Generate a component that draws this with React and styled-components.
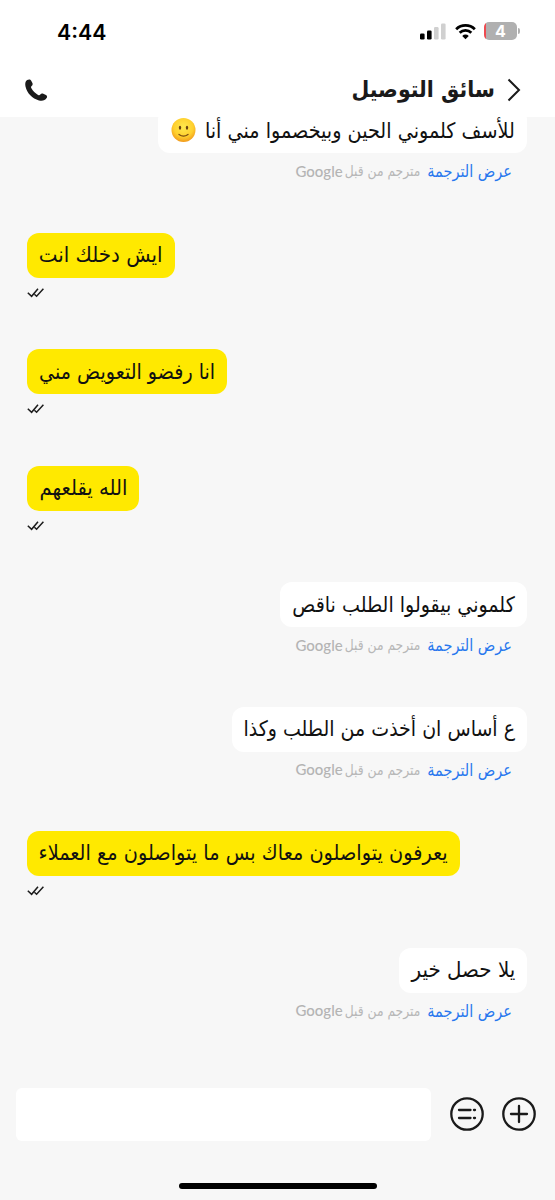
import styled, { createGlobalStyle } from "styled-components";

const messages = [
  {
    id: 1,
    text: "للأسف كلموني الحين وبيخصموا مني أنا",
    width: 369,
    stretch: 1.01,
    smile: true,
  },
  { id: 2, mine: true, text: "ايش دخلك انت", width: 148, stretch: 1.045 },
  { id: 3, mine: true, text: "انا رفضو التعويض مني", width: 200, stretch: 1.005 },
  { id: 4, mine: true, text: "الله يقلعهم", width: 112, stretch: 1.03 },
  { id: 5, text: "كلموني بيقولوا الطلب ناقص", width: 247, stretch: 1.003 },
  { id: 6, text: "ع أساس ان أخذت من الطلب وكذا", width: 295, stretch: 1 },
  {
    id: 7,
    mine: true,
    text: "يعرفون يتواصلون معاك بس ما يتواصلون مع العملاء",
    width: 433,
    stretch: 1.016,
  },
  { id: 8, text: "يلا حصل خير", width: 128, stretch: 1.045 },
];

const SmileIcon = () => (
  <svg width="25" height="25" viewBox="0 0 25 25">
    <defs>
      <radialGradient id="face" cx="50%" cy="38%" r="62%">
        <stop offset="0" stopColor="#ffe94e" />
        <stop offset="0.65" stopColor="#ffd02e" />
        <stop offset="1" stopColor="#f19a1c" />
      </radialGradient>
    </defs>
    <circle cx="12.5" cy="12" r="12" fill="url(#face)" />
    <ellipse cx="9" cy="9.7" rx="1.2" ry="2" fill="#6b4310" />
    <ellipse cx="16" cy="9.7" rx="1.2" ry="2" fill="#6b4310" />
    <path
      d="M8 16.500c2.600 1.900 6.400 1.900 9 0"
      fill="none"
      stroke="#7a4b10"
      strokeWidth="1.300"
      strokeLinecap="round"
    />
  </svg>
);

const ReadIcon = () => (
  <svg width="18" height="10" viewBox="0 0 18 10" fill="none" stroke="#1c1c1c" strokeWidth="1.500">
    <path d="M.8 4.800L4.600 8.300L11 .8" />
    <path d="M7.400 6.200L9.600 8.300L16.400 .8" />
  </svg>
);

const App = () => (
  <Screen>
    <GlobalStyle />
    <StatusBar>
      <Clock>4:44</Clock>
      <StatusIcons>
        <svg width="26" height="17" viewBox="0 0 26 17">
          <rect x="0" y="10.500" width="4.600" height="6" rx="1.300" fill="#000" />
          <rect x="7" y="7.500" width="4.600" height="9" rx="1.300" fill="#000" />
          <rect x="14" y="4" width="4.600" height="12.500" rx="1.300" fill="#d0d0d0" />
          <rect x="21" y="0.500" width="4.600" height="16" rx="1.300" fill="#d0d0d0" />
        </svg>
        <svg width="21" height="17" viewBox="0 0 22 17" fill="none" stroke="#000" strokeWidth="2.900">
          <path d="M1.200 6.100a14 14 0 0 1 19.600 0" />
          <path d="M4.900 9.900a8.800 8.800 0 0 1 12.200 0" />
          <path d="M11 16.500l-3.400-3.400a4.900 4.900 0 0 1 6.800 0z" fill="#000" stroke="none" />
        </svg>
        <Battery>
          <Level>4</Level>
          <BatteryTip />
        </Battery>
      </StatusIcons>
    </StatusBar>
    <Header>
      <svg width="23" height="23" viewBox="0 0 23 23">
        <path
          d="M2.200 1C3.800 0 5.500.2 6.200 1.700l1.200 2.400c.5 1.200.2 2.300-.8 3-.7.600-.7 1.200-.2 2.200 1.500 2.900 3.800 5.100 6.700 6.600 1 .5 1.600.4 2.200-.3.800-1.100 1.800-1.400 3-.8l2.700 1.300c1.200.6 1.400 1.800.6 3-1.500 2.300-4.300 3.200-7.600 2.300C7.300 19.700 2 14.300.5 7.500-.1 4.600.3 2.300 2.200 1z"
          fill="#1a1a1a"
        />
      </svg>
      <Title>
        <svg width="14" height="24" viewBox="0 0 14 24" fill="none" stroke="#1a1a1a" strokeWidth="2">
          <path d="M1.500 1.500L12 12L1.500 22.500" />
        </svg>
        <TitleText>سائق التوصيل</TitleText>
      </Title>
    </Header>
    <Feed>
      {messages.map(({ id, mine, text, width, stretch, smile }) => (
        <Message key={id} $mine={mine}>
          <Bubble $mine={mine} $width={width}>
            <BubbleText $stretch={stretch}>{text}</BubbleText>
            {smile && <SmileIcon />}
          </Bubble>
          {mine ? (
            <Receipt>
              <ReadIcon />
            </Receipt>
          ) : (
            <Translation>
              <ShowLink>عرض الترجمة</ShowLink>
              <Provider>مترجم من قبل</Provider>
              <Google>Google</Google>
            </Translation>
          )}
        </Message>
      ))}
    </Feed>
    <Composer>
      <svg width="34" height="34" viewBox="0 0 34 34" fill="none" stroke="#1a1a1a" strokeWidth="2.300" strokeLinecap="round">
        <circle cx="17" cy="17" r="15.700" />
        <path d="M9 17h16M17 9v16" />
      </svg>
      <svg width="34" height="34" viewBox="0 0 34 34" fill="none" stroke="#1a1a1a" strokeWidth="2.300" strokeLinecap="round">
        <circle cx="17" cy="17" r="15.700" />
        <path d="M9 13h11.500M24 13h1M9 21h11.500M24 21h1" />
      </svg>
      <Field />
    </Composer>
    <HomeArea>
      <HomeBar />
    </HomeArea>
  </Screen>
);

export default App;

const GlobalStyle = createGlobalStyle`
  body {
    margin: 0;
  }
  svg {
    display: block;
    flex: none;
  }
`;

const Screen = styled.div`
  display: flex;
  flex-direction: column;
  width: 555px;
  height: 1200px;
  overflow: hidden;
  background: #f7f7f7;
  color: #111;
  font-family: "DejaVu Sans", sans-serif;
`;

const StatusBar = styled.div`
  display: flex;
  justify-content: space-between;
  align-items: center;
  box-sizing: border-box;
  height: 62px;
  padding: 0 35px 0 57px;
  background: #fff;
`;

const Clock = styled.div`
  padding-top: 1px;
  color: #000;
  font: 600 21.300px Inter, sans-serif;
`;

const StatusIcons = styled.div`
  display: flex;
  align-items: center;
  gap: 8.500px;
`;

const Battery = styled.div`
  display: flex;
  align-items: center;
  gap: 1px;
`;

const Level = styled.div`
  display: flex;
  align-items: center;
  justify-content: center;
  width: 33px;
  height: 18px;
  border-radius: 5px;
  background: linear-gradient(90deg, #ee4a50 2px, #b0b0b0 2px);
  color: #fff;
  font: 700 16px Inter, sans-serif;
`;

const BatteryTip = styled.div`
  width: 2px;
  height: 6px;
  border-radius: 0 2px 2px 0;
  background: #b0b0b0;
`;

const Header = styled.div`
  display: flex;
  justify-content: space-between;
  align-items: center;
  box-sizing: border-box;
  height: 55px;
  padding: 1px 34px 0 25px;
  background: #fff;
`;

const Title = styled.div`
  display: flex;
  align-items: center;
  direction: rtl;
  gap: 12px;
`;

const TitleText = styled.div`
  padding-bottom: 2px;
  color: #1a1a1a;
  font-size: 20.500px;
  font-weight: 700;
  white-space: nowrap;
  transform: scaleY(1.12);
`;

const Feed = styled.div`
  height: 962px;
  overflow: hidden;
  padding: 0 28px 0 27px;

  > :first-child {
    margin-top: -8.700px;
  }
`;

const Message = styled.div`
  display: flex;
  flex-direction: column;
  align-items: ${(props) => (props.$mine ? "flex-start" : "flex-end")};
  height: ${(props) => (props.$mine ? "116.6px" : "124.3px")};
`;

const Bubble = styled.div`
  display: flex;
  align-items: center;
  justify-content: space-between;
  direction: rtl;
  box-sizing: border-box;
  width: ${(props) => props.$width}px;
  height: 45px;
  padding: 0 12px 0 13px;
  border-radius: 12px;
  background: ${(props) => (props.$mine ? "#ffe900" : "#fff")};
  font-size: 19px;
  white-space: nowrap;
`;

const BubbleText = styled.span`
  padding-bottom: 2px;
  transform: scale(${(props) => props.$stretch}, 1.13);
  transform-origin: right center;
`;

const Receipt = styled.div`
  padding-top: 10px;
`;

const Translation = styled.div`
  display: flex;
  align-items: center;
  direction: rtl;
  height: 36px;
  padding-right: 15px;
  white-space: nowrap;
`;

const ShowLink = styled.span`
  color: #2877ee;
  font-size: 14.500px;
  transform: scaleY(1.15);
`;

const Provider = styled.span`
  margin-right: 7px;
  color: #b8b8b8;
  font-size: 12.300px;
  transform: scaleY(1.2);
`;

const Google = styled.span`
  margin-right: 2px;
  padding-bottom: 1px;
  color: #b4b4b4;
  font: 500 15px Lato, sans-serif;
  transform: scaleY(1.08);
`;

const Composer = styled.div`
  display: flex;
  align-items: center;
  direction: rtl;
  gap: 18px;
  box-sizing: border-box;
  height: 70px;
  padding: 0 19px 0 16px;
`;

const Field = styled.div`
  flex: 1;
  height: 53px;
  margin-right: 1px;
  border-radius: 6px;
  background: #fff;
`;

const HomeArea = styled.div`
  display: flex;
  justify-content: center;
  padding-top: 34px;
`;

const HomeBar = styled.div`
  width: 198px;
  height: 6px;
  border-radius: 3px;
  background: #000;
`;
